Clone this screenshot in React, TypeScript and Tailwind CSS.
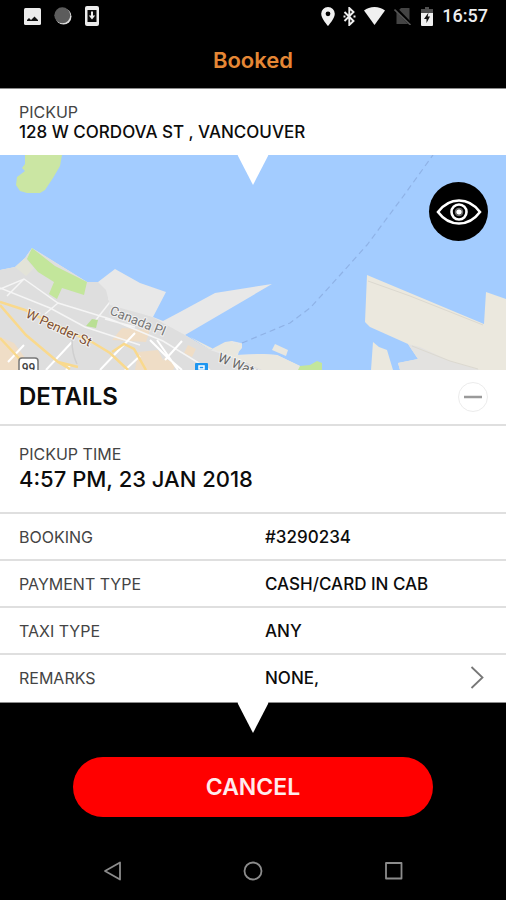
import { useState } from "react";

const rows = [
  { label: "BOOKING", value: "#3290234" },
  { label: "PAYMENT TYPE", value: "CASH/CARD IN CAB" },
  { label: "TAXI TYPE", value: "ANY" },
  { label: "REMARKS", value: "NONE,", more: true },
];

function StatusBar() {
  return (
    <div className="flex h-8 items-center justify-between pr-[18px] pl-6">
      <div className="flex items-center gap-[13px]">
        <svg width="17" height="17" viewBox="0 0 17 17" aria-hidden="true">
          <rect width="17" height="17" rx="1.5" fill="#ececec" />
          <path d="M3 13v-1l2-2 2 2 3.500-3.500 3.500 3.500v1z" fill="#111" />
        </svg>
        <svg width="18" height="18" viewBox="0 0 18 18" aria-hidden="true">
          <circle cx="9.500" cy="9.500" r="8" fill="#dcdcdc" />
          <circle cx="8.300" cy="8.300" r="8" fill="#5c5c5c" />
        </svg>
        <svg width="14" height="20" viewBox="0 0 14 20" aria-hidden="true">
          <rect width="14" height="20" rx="2" fill="#ececec" />
          <rect x="2.500" y="4" width="9" height="12" fill="#0a0a0a" />
          <path d="M6 5.500h2v4h2.200L7 13.500 3.800 9.500H6z" fill="#ececec" />
        </svg>
      </div>
      <div className="flex items-center gap-[9px]">
        <div className="flex items-center gap-2">
          <svg width="14" height="19" viewBox="0 0 14 19" aria-hidden="true">
            <path fillRule="evenodd" d="M7 0a6.800 6.800 0 0 0-6.800 6.800C.2 11.600 7 19 7 19s6.800-7.400 6.800-12.200A6.800 6.800 0 0 0 7 0zm0 4.400a2.400 2.400 0 1 1 0 4.800 2.400 2.400 0 0 1 0-4.800z" fill="#f0f0f0" />
          </svg>
          <svg width="13" height="19" viewBox="0 0 13 19" fill="none" stroke="#f0f0f0" strokeWidth="1.900" aria-hidden="true">
            <path d="M1.500 5l9 9-4.200 4V1l4.200 4-9 9" />
            <path d="M.5 9.500h2M10.500 9.500h2" strokeWidth="2" />
          </svg>
          <svg width="21" height="18" viewBox="0 0 22 18" preserveAspectRatio="none" aria-hidden="true">
            <path d="M11 18L0 3.600C3 1.300 6.800 0 11 0s8 1.300 11 3.600z" fill="#f0f0f0" />
          </svg>
        </div>
        <svg width="18" height="18" viewBox="0 0 18 18" aria-hidden="true">
          <path d="M7 1h8.500v16h-13V5.500z" fill="#444" />
          <path d="M1 1l16.500 17" stroke="#000" strokeWidth="3.500" />
          <path d="M.5 2.500l16 15.500" stroke="#555" strokeWidth="1.600" />
        </svg>
        <svg width="12" height="19" viewBox="0 0 12 19" aria-hidden="true">
          <path d="M4 0h4v2h4v4H0V2h4z" fill="#505050" />
          <path d="M0 6h12v12q0 1-1 1H1q-1 0-1-1z" fill="#f0f0f0" />
          <path d="M7.500 5.500L3 12h2.500v4L9 9.500H6.700z" fill="#111" />
        </svg>
        <span className="font-[Roboto,sans-serif] text-lg leading-6 font-medium text-[#eeeeee]">16:57</span>
      </div>
    </div>
  );
}

function HarbourMap() {
  return (
    <svg
      className="absolute inset-0 h-full w-full"
      viewBox="0 155 506 215"
      preserveAspectRatio="xMidYMid slice"
      role="img"
      aria-label="Map of the pickup area"
    >
      <defs>
        <clipPath id="city">
          <path d="M0 270L15 267 25 258 32 248 87 282 98 282 106 290 110 305 153 317 163 323 185 335 210 350 245 362 262 370H0z" />
        </clipPath>
      </defs>
      <rect y="155" width="506" height="215" fill="#a3ccff" />
      <path d="M25 155H62L60 166 53 178 45 190 40 193H27L20 191 16 185 17 177 25 171 22 168 25 164z" fill="#cbe6a3" />

      <path d="M0 270L15 267 25 258 32 248 87 282 98 282 115 269 140 283 166 292 153 317 163 321 180 312 215 293 272 284 185 335 210 350 232 341 241 343 238 355 262 354 277 355 300 366V370H0z" fill="#e8e8e8" />
      <path d="M190 337L210 350 225 342 232 341 233 344 237 342 238 345 242 343 242 348 236 355 262 354 277 355 300 366V370H255z" fill="#e9e7df" />
      <g clipPath="url(#city)">
        <path d="M0 250H110L108 300 163 321 270 370H0z" fill="#dedede" />
        <path d="M15 267L25 258 34 268 26 276z" fill="#e3e3d8" />
        <path d="M0 337L14 343 34 370H0zM122 328L150 330 146 342 112 340zM138 352L158 350 168 370H135zM188 345l8 4-4 8-8-4zM164 358l12 6-3 6h-12z" fill="#efddc6" />
        <g stroke="#f5f5f5" fill="none" strokeWidth="1.500">
          <path d="M0 289L24 279 58 303 110 319 163 341 210 370M0 288L50 308 85 327 140 345M24 279L7 296M58 303L45 314M110 302L92 325M105 319L135 327" />
        </g>
        <g stroke="#fff" fill="none" strokeWidth="2">
          <path d="M72 342L46 370M135 333L100 370M140 356L125 370M150 340L168 358 182 370M157 340L178 370M24 345L8 362M66 370L70 366M182 341L165 360" />
        </g>
        <path d="M72 340q0 14 5 24" stroke="#cfcfcf" strokeWidth="1.500" fill="none" />
        <g stroke="#f9d98d" fill="none" strokeWidth="2.500">
          <path d="M0 302L25 310 55 325 92 342 110 353 128 370M0 305L26 335 58 362 70 369M112 352L124 344 134 349 146 370M0 338L28 368M58 362L78 367" />
        </g>
      </g>
      <path d="M32 248L55 266 87 282 84 295 62 288 57 299 49 294 54 282 38 272 27 259z" fill="#c3e69b" />
      <path d="M92 319L98 320 96 328 86 326z" fill="#b9df94" />
      <path d="M275 344L288 350 286 356 272 350z" fill="#e9e7df" />
      <path d="M300 366L310 365 317 361 322 363V370H298z" fill="#c3e69b" />

      <path d="M367 275L484 324 486 292 506 299V370H400L398 363 418 359 408 344 370 327 365 322z" fill="#ebe8de" />
      <path d="M373 342L379 347 387 350 393 370H371z" fill="#ebe8de" />
      <path d="M408 344L420 347 450 361 480 370H400L398 363 418 359z" fill="#e3e2e0" />
      <path d="M368 281L410 296 483 325M412 346L450 361 478 369" stroke="#dcd9d0" strokeWidth="1" fill="none" />
      <path d="M242 343L290 323 310 308 332 284 367 245 402 198 433 155" fill="none" stroke="#8fb2e6" strokeWidth="1.200" strokeDasharray="6 4" />

      <g fontFamily="Roboto, sans-serif" fontSize="13" stroke="#fff" strokeWidth="2" paintOrder="stroke" strokeOpacity=".6">
        <text transform="translate(25 317) rotate(25)" fill="#7d4f35">W Pender St</text>
        <text transform="translate(109 314) rotate(22)" fill="#777">Canada Pl</text>
        <text transform="translate(217 361) rotate(22)" fill="#666">W Waterfront Rd</text>
      </g>
      <rect x="19" y="358" width="19" height="18" rx="3" fill="#fff" stroke="#777" strokeWidth="1.500" />
      <text x="28.500" y="372" textAnchor="middle" fontFamily="Roboto, sans-serif" fontSize="12" fontWeight="500" fill="#444">99</text>
      <rect x="195" y="363" width="13" height="13" rx="1" fill="#1e96f0" />
      <path d="M199 366h5v3h-5z" fill="none" stroke="#fff" strokeWidth="1.500" />
    </svg>
  );
}

function Pointer() {
  return (
    <svg className="absolute -top-px left-1/2 -translate-x-1/2" width="31" height="31" viewBox="0 0 31 31" aria-hidden="true">
      <path d="M0 0H31V1L15.500 31 0 1z" fill="#fff" />
    </svg>
  );
}

export default function App() {
  const [open, setOpen] = useState(true);
  return (
    <div className="flex min-h-screen flex-col bg-black font-[Inter,sans-serif] text-[#0c0c0c]">
      <header>
        <StatusBar />
        <h1 className="flex h-14 items-center justify-center text-[22px] leading-7 font-semibold text-[#e58735]">Booked</h1>
      </header>

      <main className="flex flex-1 flex-col bg-white">
        <section className="border-t border-[#8c8c8c] px-[19px] py-[13px]">
          <h2 className="text-base leading-5 text-[#444444]">PICKUP</h2>
          <p className="text-[17px] leading-5 font-medium">128 W CORDOVA ST , VANCOUVER</p>
        </section>

        <section className="relative min-h-[200px] flex-1 bg-[#a3ccff]">
          <HarbourMap />
          <Pointer />
          <button type="button" aria-label="Show taxi on map" className="absolute top-[27px] right-[18px] flex size-[59px] items-center justify-center rounded-full bg-black">
            <svg width="46" height="28" viewBox="0 0 46 28" fill="none" stroke="#fff" strokeWidth="2.600" aria-hidden="true">
              <path d="M2 14C8 6 15 2.500 23 2.500s15 3.500 21 11.500c-6 8-13 11.500-21 11.500S8 22 2 14z" />
              <circle cx="23" cy="14" r="7.500" />
              <circle cx="23" cy="14" r="2.800" fill="#fff" stroke="none" />
              <circle cx="23" cy="14" r="3.800" strokeWidth="1" strokeOpacity=".5" />
            </svg>
          </button>
        </section>

        <section>
          <div className="flex h-14 items-center justify-between border-b-2 border-[#dfdfdf] pr-[18px] pl-[19px]">
            <h2 className="text-2xl leading-7 font-semibold">DETAILS</h2>
            <button
              type="button"
              aria-label="Toggle details"
              aria-expanded={open}
              onClick={() => setOpen(!open)}
              className="flex size-[30px] items-center justify-center rounded-full border border-[#ececec]"
            >
              <svg width="18" height="4" viewBox="0 0 18 4" aria-hidden="true">
                <path d="M0 2h18" stroke="#9a9a9a" strokeWidth="2.500" />
              </svg>
            </button>
          </div>
          {open && (
            <dl>
              <div className="border-b-2 border-[#dfdfdf] px-[19px] py-[18px]">
                <dt className="text-base leading-5 text-[#444444]">PICKUP TIME</dt>
                <dd className="text-[22px] leading-[30px] font-medium">4:57 PM, 23 JAN 2018</dd>
              </div>
              {rows.map((row) => (
                <div key={row.label} className="flex h-[47px] items-center border-b-2 border-[#dfdfdf] pr-[22px] pl-[19px] last:border-white">
                  <dt className="w-[246px] text-base leading-5 text-[#444444]">{row.label}</dt>
                  <dd className="flex flex-1 items-center justify-between text-[17px] leading-5 font-medium">
                    {row.value}
                    {row.more && (
                      <button type="button" aria-label="View remarks">
                        <svg width="14" height="23" viewBox="0 0 14 23" fill="none" stroke="#777" strokeWidth="1.800" aria-hidden="true">
                          <path d="M1.500 1L12.500 11.500 1.500 22" />
                        </svg>
                      </button>
                    )}
                  </dd>
                </div>
              ))}
            </dl>
          )}
        </section>
      </main>

      <footer className="relative border-t border-[#8c8c8c]">
        <Pointer />
        <div className="flex justify-center px-6 pt-[54px] pb-6">
          <button type="button" className="h-[60px] w-full max-w-[360px] rounded-full bg-[#ff0000] text-[23px] leading-7 font-semibold text-[#ffecec]">
            CANCEL
          </button>
        </div>
        <nav className="mx-auto grid h-[59px] w-5/6 grid-cols-3 place-items-center">
          <button type="button" aria-label="Back">
            <svg width="20" height="20" viewBox="0 0 20 20" fill="none" stroke="#8c8c8c" strokeWidth="1.800" strokeLinejoin="round" aria-hidden="true">
              <path d="M18 1.500v17L3 10z" />
            </svg>
          </button>
          <button type="button" aria-label="Home">
            <svg width="20" height="20" viewBox="0 0 20 20" fill="none" stroke="#8c8c8c" strokeWidth="1.800" aria-hidden="true">
              <circle cx="10" cy="10" r="8.500" />
            </svg>
          </button>
          <button type="button" aria-label="Recent apps">
            <svg width="20" height="20" viewBox="0 0 20 20" fill="none" stroke="#8c8c8c" strokeWidth="1.800" strokeLinejoin="round" aria-hidden="true">
              <rect x="2" y="2" width="15.500" height="15.500" />
            </svg>
          </button>
        </nav>
      </footer>
    </div>
  );
}
